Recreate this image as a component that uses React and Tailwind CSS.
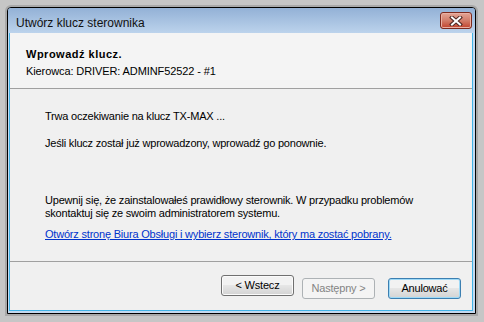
import React from 'react';

// Przycisk okna dialogowego w stylu Windows 7
const DialogButton = ({ children, disabled, isDefault }) => {
  if (disabled) {
    return (
      <button
        disabled
        className="w-[73px] h-[21px] rounded-[3px] border border-[#adb2b5] bg-[#f4f4f4] text-[#838383] text-[11px] leading-none tracking-[-0.2px]"
      >
        {children}
      </button>
    );
  }
  return (
    <button
      className={`w-[73px] h-[21px] rounded-[3px] border text-[11px] leading-none tracking-[-0.2px] text-black bg-linear-to-b from-[#f2f2f2] from-45% via-[#e6e6e6] via-50% to-[#d3d3d3] ${
        isDefault
          ? 'border-[#3c7fb1] shadow-[inset_0_0_0_1px_#9fdaf7]'
          : 'border-[#707070] shadow-[inset_0_0_0_1px_#fbfbfb]'
      }`}
    >
      {children}
    </button>
  );
};

// Przycisk zamykania na pasku tytułu
const CloseButton = () => (
  <div className="w-[32px] h-[17px] rounded-[3px] border border-[#7c2a1e] bg-linear-to-b from-[#e3a596] from-0% via-[#d27d6a] via-50% to-[#c1402a] flex items-center justify-center shadow-[inset_0_0_0_1px_#eab0a4]">
    <svg width="14" height="10" viewBox="0 0 14 10">
      <path d="M3 1.5 L11 8.5 M11 1.5 L3 8.5" stroke="#4a2520" strokeWidth="4" strokeLinecap="square" />
      <path d="M3 1.5 L11 8.5 M11 1.5 L3 8.5" stroke="#ffffff" strokeWidth="2" strokeLinecap="square" />
    </svg>
  </div>
);

export default function App() {
  return (
    <div
      className="w-[484px] h-[322px] bg-[#c6c6c6] pl-[7px] pt-[7px] pr-[8px] pb-[8px] overflow-hidden"
      style={{ fontFamily: '"Liberation Sans", Arial, sans-serif' }}
    >
      <div className="w-[469px] h-[307px] border border-black bg-[#c4d9ef] rounded-tl-[4px] rounded-tr-[4px] flex flex-col shadow-[0_0_0_2px_#a9a9a9]">
        {/* Pasek tytułu */}
        <div className="h-[25px] shrink-0 bg-linear-to-b from-[#93b1d6] to-[#bcd3ec] flex items-start justify-between pl-[8px] pr-[3px] rounded-t-[3px]">
          <span className="text-[12px] leading-[14px] mt-[8px] text-[#111]">Utwórz klucz sterownika</span>
          <div className="mt-[4px]">
            <CloseButton />
          </div>
        </div>

        {/* Obszar klienta */}
        <div className="flex-1 ml-[1px] mr-[2px] mb-[2px] border border-t-0 border-[#41b3e6] bg-[#f0f0f0] flex flex-col">
          {/* Nagłówek */}
          <div className="h-[56px] shrink-0 bg-[#f4f4f4] border-b border-[#a0a0a0] pl-[16px] pt-[15px]">
            <div className="text-[11px] leading-[13px] font-bold tracking-[0.5px] text-black">Wprowadź klucz.</div>
            <div className="text-[11px] leading-[13px] tracking-[-0.1px] text-black mt-[4px]">Kierowca: DRIVER: ADMINF52522 - #1</div>
          </div>

          {/* Treść */}
          <div className="h-[173px] shrink-0 border-b border-[#a0a0a0] pl-[35px] pt-[21px] text-[11px] leading-[13px] tracking-[-0.2px] text-black">
            <p>Trwa oczekiwanie na klucz TX-MAX ...</p>
            <p className="mt-[14px]">Jeśli klucz został już wprowadzony, wprowadź go ponownie.</p>
            <p className="mt-[44px]">
              Upewnij się, że zainstalowałeś prawidłowy sterownik. W przypadku problemów
              <br />
              skontaktuj się ze swoim administratorem systemu.
            </p>
            <p className="mt-[8px]">
              <a href="#" className="text-[#0033cc] underline">
                Otwórz stronę Biura Obsługi i wybierz sterownik, który ma zostać pobrany.
              </a>
            </p>
          </div>

          {/* Przyciski */}
          <div className="flex justify-end items-start pt-[13px] pr-[11px]">
            <DialogButton>&lt; Wstecz</DialogButton>
            <div className="ml-[8px]">
              <DialogButton disabled>Następny &gt;</DialogButton>
            </div>
            <div className="ml-[13px]">
              <DialogButton isDefault>Anulować</DialogButton>
            </div>
          </div>
        </div>
      </div>
    </div>
  );
}
